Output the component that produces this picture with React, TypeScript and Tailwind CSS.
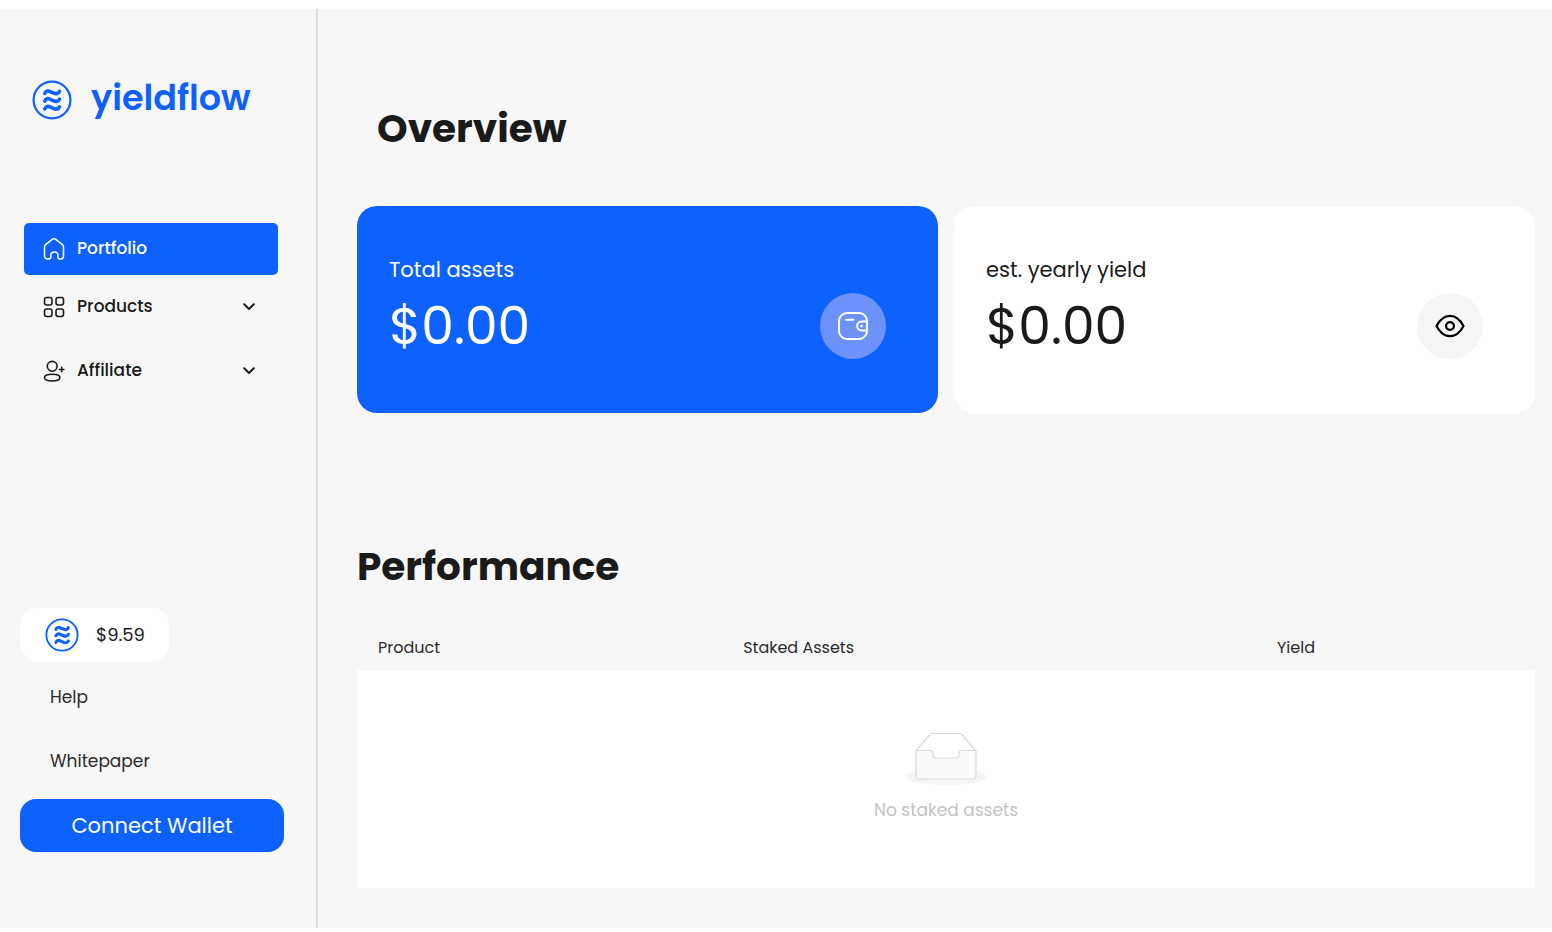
import { ReactNode } from "react";

function LogoMark({ className }: { className: string }) {
  return (
    <svg viewBox="0 0 40 40" fill="none" stroke="#0c61ff" className={className} aria-hidden="true">
      <circle cx="20" cy="20" r="18.4" strokeWidth="2.2" />
      <g strokeWidth="3.6" strokeLinecap="round">
        <path d="M12.8 13.4c1-2.600 3.300-3 5.400-1.800l3.600 1.600c2.400 1.100 4.700.5 5.700-1.800" />
        <path d="M12.8 21.100c1-2.600 3.300-3 5.400-1.800l3.600 1.600c2.400 1.100 4.700.5 5.700-1.800" />
        <path d="M12.8 28.800c1-2.600 3.300-3 5.400-1.800l3.600 1.600c2.400 1.100 4.700.5 5.700-1.800" />
      </g>
    </svg>
  );
}

function HomeIcon() {
  return (
    <svg viewBox="0 0 22 22" fill="none" stroke="currentColor" strokeWidth="1.5" strokeLinejoin="round" className="size-[22px]">
      <path d="M1.500 9.200c0-1.300.4-2.100 1.400-2.900l6.400-4.900c1.100-.8 2.300-.8 3.400 0l6.400 4.900c1 .8 1.400 1.600 1.400 2.900v8.800c0 2-1 3.100-2.900 3.100s-2.700-.9-2.700-2.600v-1.700c0-1.800-1.200-2.800-3.500-2.800s-3.500 1-3.500 2.800v1.700c0 1.700-.8 2.600-2.700 2.600s-3.700-1.100-3.700-3.100z" />
    </svg>
  );
}

function GridIcon() {
  return (
    <svg viewBox="0 0 22 22" fill="none" stroke="currentColor" strokeWidth="1.600" className="size-[22px]">
      <rect x="1.500" y="1.500" width="7.500" height="7.500" rx="2.200" />
      <rect x="13" y="1.500" width="7.500" height="7.500" rx="2.200" />
      <rect x="1.500" y="13" width="7.500" height="7.500" rx="2.200" />
      <rect x="13" y="13" width="7.500" height="7.500" rx="2.200" />
    </svg>
  );
}

function UserPlusIcon() {
  return (
    <svg viewBox="0 0 22 22" fill="none" stroke="currentColor" strokeWidth="1.600" className="size-[22px]">
      <circle cx="9.200" cy="6.300" r="4.900" />
      <path d="M1.500 17.500c0-2.300 2.600-3.300 7.700-3.300s7.700 1 7.700 3.300-2.600 3.500-7.700 3.500-7.700-1.200-7.700-3.500z" />
      <path d="M18.700 7.300v4.400M16.500 9.500h4.400" strokeLinecap="round" />
    </svg>
  );
}

function ChevronIcon() {
  return (
    <svg viewBox="0 0 12 12" fill="none" stroke="currentColor" strokeWidth="2" strokeLinecap="round" strokeLinejoin="round" className="size-3">
      <path d="M1.200 3.200 6 8l4.800-4.800" />
    </svg>
  );
}

function WalletIcon() {
  return (
    <svg viewBox="0 0 32 30" fill="none" stroke="currentColor" strokeWidth="2" className="h-[30px] w-8">
      <rect x="2" y="2" width="28" height="26" rx="8" />
      <path d="M9 8.800h7.500" strokeLinecap="round" />
      <path d="M30 10.600h-5.500a4.400 4.400 0 0 0 0 8.800H30" />
      <circle cx="24.700" cy="15" r="1" fill="currentColor" strokeWidth="1" />
    </svg>
  );
}

function EyeIcon() {
  return (
    <svg viewBox="0 0 30 24" fill="none" stroke="currentColor" strokeWidth="2.200" strokeLinejoin="round" className="h-6 w-[30px]">
      <path d="M1.500 12C5 5.300 9.500 1.900 15 1.900S25 5.300 28.500 12C25 18.700 20.500 22.100 15 22.100S5 18.700 1.500 12z" />
      <circle cx="15" cy="12" r="3.900" />
    </svg>
  );
}

function EmptyBox() {
  return (
    <svg viewBox="0 0 80 54" fill="none" className="h-[54px] w-20" aria-hidden="true">
      <ellipse cx="40" cy="44.500" rx="40" ry="8.500" fill="#f5f5f5" />
      <g stroke="#d9d9d9" strokeWidth="1.200">
        <path d="M10 19 24.200 2.500c.6-.6 1.300-1 2.200-1h27.200c.9 0 1.600.4 2.200 1L70 19" fill="#fff" />
        <path
          d="M10 18.500h14c1.800 0 3 1.300 3 3v1.200c0 2 1.200 3.300 3 3.300h20c1.800 0 3-1.300 3-3.300v-1.200c0-1.700 1.200-3 3-3h14v25c0 2.300-1.500 3.500-3.300 3.500H13.300c-1.800 0-3.300-1.200-3.300-3.500z"
          fill="#fafafa"
        />
      </g>
    </svg>
  );
}

function Sidebar() {
  const menus = [
    { label: "Products", icon: <GridIcon /> },
    { label: "Affiliate", icon: <UserPlusIcon /> },
  ];

  return (
    <aside className="flex w-[318px] shrink-0 flex-col border-r-2 border-[#dedede] pt-[71px] pb-[76px]">
      <a href="#" className="ml-8 flex h-10 items-center gap-[19px] text-[#0c61ff]">
        <LogoMark className="size-10" />
        <span className="pb-1 text-[35px] leading-9 font-semibold">yieldflow</span>
      </a>

      <nav className="mt-[103px] mr-[38px] ml-6 text-[17px] font-medium">
        <a href="#" className="flex h-[52px] items-center gap-3 rounded-[5px] bg-[#0c61ff] px-[19px] text-white">
          <HomeIcon />
          Portfolio
        </a>
        {menus.map((menu) => (
          <button key={menu.label} type="button" className="flex h-16 w-full items-center gap-3 px-[19px]">
            {menu.icon}
            {menu.label}
            <span className="mr-1 ml-auto">
              <ChevronIcon />
            </span>
          </button>
        ))}
      </nav>

      <div className="mt-auto mr-8 ml-5 text-[17px]">
        <div className="flex h-[53px] w-[149px] items-center gap-[17px] rounded-2xl bg-white pl-[25px] text-[18px]">
          <LogoMark className="size-[34px]" />
          $9.59
        </div>
        <div className="my-[5px] ml-[30px] text-[#2a2a2a]">
          <a href="#" className="flex h-16 items-center">Help</a>
          <a href="#" className="flex h-16 items-center">Whitepaper</a>
        </div>
        <button type="button" className="h-[53px] w-full rounded-2xl bg-[#0c61ff] text-[21px] text-white">
          Connect Wallet
        </button>
      </div>
    </aside>
  );
}

type StatCardProps = {
  label: string;
  value: string;
  icon: ReactNode;
  cardClass: string;
  badgeClass: string;
};

function StatCard({ label, value, icon, cardClass, badgeClass }: StatCardProps) {
  return (
    <div className={`rounded-[20px] pt-12 pr-[52px] pb-[54px] pl-8 ${cardClass}`}>
      <p className="text-[21px] leading-8">{label}</p>
      <div className="mt-[7px] flex items-center justify-between">
        <p className="text-[52px] leading-[66px]">{value}</p>
        <span className={`flex size-[66px] items-center justify-center rounded-full ${badgeClass}`}>{icon}</span>
      </div>
    </div>
  );
}

export default function App() {
  return (
    <div className="flex min-h-screen flex-col bg-white pt-[9px] pb-1 font-[Poppins,Inter,sans-serif] text-[#1a1a1a]">
      <div className="flex flex-1 bg-[#f7f7f7]">
        <Sidebar />

        <main className="min-w-0 flex-1 pt-24 pr-[17px] pl-[39px]">
          <h1 className="pl-5 text-[39px] leading-12 font-bold">Overview</h1>

          <section className="mt-[53px] grid grid-cols-2 gap-4">
            <StatCard
              label="Total assets"
              value="$0.00"
              icon={<WalletIcon />}
              cardClass="bg-[#0c61ff] text-white"
              badgeClass="bg-[#6d92fb]"
            />
            <StatCard
              label="est. yearly yield"
              value="$0.00"
              icon={<EyeIcon />}
              cardClass="bg-white"
              badgeClass="bg-[#f5f5f5] text-black"
            />
          </section>

          <h2 className="mt-[130px] text-[39px] leading-12 font-bold">Performance</h2>

          <table className="mt-[35px] w-full table-fixed text-left">
            <thead>
              <tr className="h-11 text-base text-[#2a2a2a]">
                <th className="w-[31%] pl-[21px] font-normal">Product</th>
                <th className="pl-[21px] font-normal">Staked Assets</th>
                <th className="w-[279px] pl-[21px] font-normal">Yield</th>
              </tr>
            </thead>
            <tbody>
              <tr className="bg-white">
                <td colSpan={3} className="h-[218px]">
                  <div className="flex flex-col items-center gap-3 pb-1 text-[17px] leading-6 text-[#c4c4c4]">
                    <EmptyBox />
                    No staked assets
                  </div>
                </td>
              </tr>
            </tbody>
          </table>
        </main>
      </div>
    </div>
  );
}
